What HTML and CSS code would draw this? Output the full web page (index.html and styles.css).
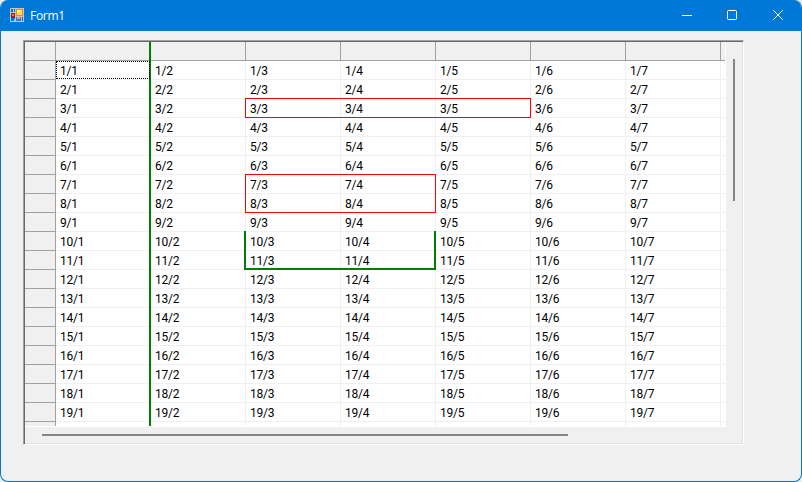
FILE: index.html
```html
<!DOCTYPE html>
<html lang="en">
<head>
<meta charset="utf-8">
<title>Form1</title>
<link rel="stylesheet" href="styles.css">
</head>
<body>
<div class="window">
  <header class="titlebar">
    <svg class="app-icon" width="14" height="14" viewBox="0 0 14 14" shape-rendering="crispEdges">
      <path fill="#c4c4bd" d="M0 0h14v14H0z"/>
      <path fill="#0078d7" d="M1 1h2v3H1zM4 1h1v3H4zM1 11h3v2H1zM1 10h4v1H1zM12 9h1v4h-1z"/>
      <path fill="#a81c13" d="M1 5h4v5H1z"/>
      <path fill="#e67a68" d="M2 6h2v2H2z"/>
      <path fill="#d79b09" d="M6 1h7v7H6z"/>
      <path fill="#ffd85b" d="M7 2h5v5H7z"/>
      <path fill="#fff0ac" d="M7 2h3v2H7z"/>
      <path fill="#3c74df" d="M6 9h5v4H6z"/>
      <path fill="#8db7f5" d="M7 9h3v2H7z"/>
    </svg>
    <span class="title">Form1</span>
    <div class="controls">
      <svg width="46" height="30" viewBox="0 0 46 30"><path d="M18 15.5h10"/></svg>
      <svg width="46" height="30" viewBox="0 0 46 30"><rect x="17.5" y="10.5" width="9" height="9" rx="1"/></svg>
      <svg width="46" height="30" viewBox="0 0 46 30"><path d="M17.2 10.2l9.6 9.6M26.8 10.2l-9.6 9.6"/></svg>
    </div>
  </header>
  <main class="client">
    <section class="panel">
      <div class="viewport"><div class="grid" id="grid"></div></div>
      <div class="vscroll"><div class="vthumb"></div></div>
      <div class="hscroll"><div class="hthumb"></div></div>
    </section>
  </main>
</div>
<script src="script.js"></script>
</body>
</html>
```
FILE: styles.css
```css
* { box-sizing: border-box; }
body { margin: 0; background: #e9edf1; }
.window {
  width: 802px;
  height: 482px;
  display: flex;
  flex-direction: column;
  overflow: hidden;
  background: #f0f0f0;
  border: solid #0078d7;
  border-width: 0 1px 1px;
  border-radius: 8px;
}
.titlebar {
  flex: none;
  height: 31px;
  display: flex;
  align-items: flex-start;
  padding-left: 9px;
  background: #0078d7;
  color: #fff;
  font: 12px/16px "Open Sans", "Noto Sans", sans-serif;
  letter-spacing: -0.3px;
}
.app-icon { margin-top: 8px; }
.title { margin: 8px 0 0 6px; }
.controls { display: flex; margin: 0 -1px 0 auto; }
.controls svg { display: block; fill: none; stroke: #fff; stroke-width: 1; }
.client { padding: 9px 0 0 22px; }
.panel {
  width: 721px;
  height: 405px;
  display: grid;
  grid-template: 385px 16px / 701px 16px;
  border: 1px solid;
  border-color: #a0a0a0 #fff #fff #a0a0a0;
  box-shadow: inset 1px 1px #696969, inset -1px -1px #e3e3e3;
  padding: 1px;
}
.viewport { background: #fff; padding: 0 1px 1px 0; }
.grid {
  width: 700px;
  height: 384px;
  overflow: hidden;
  display: grid;
  grid-template-columns: 31px repeat(8, 95px);
  grid-template-rows: repeat(21, 19px);
}
.head {
  background: #f0f0f0;
  border: solid #a0a0a0;
  border-width: 0 1px 1px 0;
}
.cell {
  border: solid #f0f0f0;
  border-width: 0 1px 1px 0;
  padding-left: 4px;
  color: #000;
  font: 12px/20px Roboto, "Liberation Sans", sans-serif;
  letter-spacing: -0.2px;
  white-space: nowrap;
}
.range { z-index: 1; margin: -1px 0 0 -1px; }
.red { border: 1px solid #f00; }
.rule { border-right: 2px solid #008000; }
.green {
  margin-left: -2px;
  border: solid #008000;
  border-width: 0 2px 2px;
}
.focus { margin: 0 1px 1px 0; border: 1px dotted #000; }
.vscroll { padding: 17px 0 0 7px; }
.vthumb { width: 2px; height: 142px; background: #858585; }
.hscroll { padding: 7px 0 0 17px; }
.hthumb { width: 526px; height: 2px; background: #858585; }
```
FILE: script.js
```
const grid = document.getElementById("grid");

function add(className, row, col, rowSpan = 1, colSpan = 1, text = "") {
  const el = document.createElement("div");
  el.className = className;
  el.style.gridArea = `${row} / ${col} / span ${rowSpan} / span ${colSpan}`;
  el.textContent = text;
  grid.append(el);
}

for (let r = 0; r <= 20; r++) {
  for (let c = 0; c <= 8; c++) {
    const header = r === 0 || c === 0;
    const visible = !header && r < 20 && c < 8;
    add(header ? "head" : "cell", r + 1, c + 1, 1, 1, visible ? `${r}/${c}` : "");
  }
}

add("range rule", 1, 2, 21, 1);
add("range red", 4, 4, 1, 3);
add("range red", 8, 4, 2, 2);
add("range green", 11, 4, 2, 2);
add("range focus", 2, 2);
```
